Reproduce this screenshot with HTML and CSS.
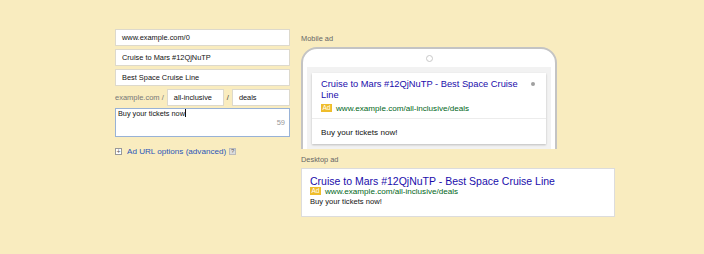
FILE: index.html
```html
<!DOCTYPE html>
<html lang="en">
<head>
    <meta charset="UTF-8">
    <title>Ad preview</title>
    <link rel="stylesheet" href="styles.css">
</head>
<body>
    <div class="page">
        <div class="editor">
            <div class="field">www.example.com/0</div>
            <div class="field">Cruise to Mars #12QjNuTP</div>
            <div class="field">Best Space Cruise Line</div>
            <div class="path-row">
                <span class="domain">example.com /</span>
                <div class="field path">all-inclusive</div>
                <span class="slash">/</span>
                <div class="field path last">deals</div>
            </div>
            <div class="desc-box">
                <div class="desc-text">Buy your tickets now<span class="caret"></span></div>
                <div class="count">59</div>
            </div>
            <div class="options">
                <span class="plus-box">+</span>
                <span class="options-link">Ad URL options (advanced)</span>
                <span class="help-box">?</span>
            </div>
        </div>
        <div class="preview">
            <div class="label">Mobile ad</div>
            <div class="phone-clip">
                <div class="phone">
                    <div class="camera"></div>
                    <div class="screen">
                        <div class="card">
                            <div class="card-head">
                                <div class="m-title">Cruise to Mars #12QjNuTP - Best Space Cruise Line</div>
                                <span class="info-dot"></span>
                                <div class="url-line"><span class="badge">Ad</span>www.example.com/all-inclusive/deals</div>
                            </div>
                            <div class="card-desc">Buy your tickets now!</div>
                        </div>
                    </div>
                </div>
            </div>
            <div class="label desktop-label">Desktop ad</div>
            <div class="desktop">
                <div class="d-title">Cruise to Mars #12QjNuTP - Best Space Cruise Line</div>
                <div class="url-line d-url"><span class="badge">Ad</span>www.example.com/all-inclusive/deals</div>
                <div class="d-desc">Buy your tickets now!</div>
            </div>
        </div>
    </div>
</body>
</html>
```

FILE: styles.css
```css
* {
    margin: 0;
    padding: 0;
    box-sizing: border-box;
}
body {
    background: #f9ecbf;
    font-family: "Liberation Sans", Arial, sans-serif;
    color: #111;
    height: 254px;
    overflow: hidden;
}
.page {
    display: flex;
    gap: 11px;
    padding: 29px 0 0 115px;
}
.editor {
    width: 175px;
    display: flex;
    flex-direction: column;
}
.field {
    height: 17px;
    background: white;
    border: 1px solid #ddd9cc;
    padding: 0 6px;
    font-size: 7.4px;
    line-height: 15px;
    margin-bottom: 3px;
    white-space: nowrap;
}
.path-row {
    display: flex;
    align-items: center;
    gap: 3px;
    margin-bottom: 2px;
}
.path-row .field {
    margin-bottom: 0;
}
.domain {
    font-size: 7.5px;
    color: #777;
}
.slash {
    font-size: 7.5px;
    color: #444;
}
.path {
    width: 57px;
}
.path.last {
    flex: 1;
}
.desc-box {
    height: 29px;
    background: white;
    border: 1px solid #98b2d6;
    padding: 0 4px 0 2px;
    font-size: 7.3px;
    line-height: 9px;
}
.caret {
    display: inline-block;
    width: 1px;
    height: 8px;
    background: #111;
    vertical-align: -1px;
}
.count {
    text-align: right;
    color: #999;
    font-size: 7.5px;
}
.options {
    display: flex;
    align-items: center;
    margin-top: 9px;
    height: 10px;
}
.plus-box {
    width: 7px;
    height: 7px;
    border: 1px solid #999;
    font-size: 7px;
    line-height: 5px;
    text-align: center;
    color: #555;
    background: #fff;
    margin-right: 5px;
}
.options-link {
    font-size: 8.1px;
    color: #2a56b8;
}
.help-box {
    width: 7px;
    height: 7px;
    background: #ddd;
    border: 1px solid #bbb;
    font-size: 6px;
    line-height: 5px;
    text-align: center;
    color: #555;
    margin-left: 3px;
}
.preview {
    width: 315px;
    padding-top: 5px;
}
.label {
    font-size: 7.4px;
    line-height: 10px;
    color: #666;
}
.phone-clip {
    margin-top: 3px;
    height: 102px;
    width: 256px;
    overflow: hidden;
}
.phone {
    height: 140px;
    border: 2px solid #c4c4c4;
    border-radius: 16px;
    background: white;
    padding: 6px 4px 0;
}
.camera {
    width: 7px;
    height: 7px;
    border: 1px solid #c8c8c8;
    border-radius: 50%;
    margin: 0 auto 5px;
}
.screen {
    background: #f2f2f2;
    height: 100px;
    padding: 6px 5px 0;
}
.card {
    background: white;
    box-shadow: 0 1px 2px rgba(0, 0, 0, 0.22);
}
.card-head {
    position: relative;
    padding: 6px 24px 4px 9px;
    border-bottom: 1px solid #ececec;
}
.m-title {
    font-size: 9.3px;
    line-height: 11px;
    color: #1a0dab;
}
.info-dot {
    position: absolute;
    top: 9px;
    right: 11px;
    width: 4px;
    height: 4px;
    border-radius: 50%;
    background: #a0a0a0;
}
.url-line {
    font-size: 8.1px;
    line-height: 11px;
    color: #006621;
    margin-top: 2px;
    white-space: nowrap;
}
.badge {
    display: inline-block;
    background: #efbd2c;
    color: white;
    font-size: 6.5px;
    line-height: 8px;
    padding: 0 1.5px;
    margin-right: 4px;
    vertical-align: 1px;
}
.card-desc {
    font-size: 8.1px;
    line-height: 11px;
    padding: 8px 9px 6px;
}
.desktop-label {
    margin-top: 6px;
}
.desktop {
    margin-top: 3px;
    width: 314px;
    height: 49px;
    background: white;
    border: 1px solid #dcdcdc;
    padding: 6px 8px 0;
}
.d-title {
    font-size: 10.5px;
    line-height: 12px;
    color: #1a0dab;
    white-space: nowrap;
}
.d-url {
    margin-top: 0;
    line-height: 10px;
}
.d-desc {
    font-size: 7.6px;
    line-height: 9px;
}
```
